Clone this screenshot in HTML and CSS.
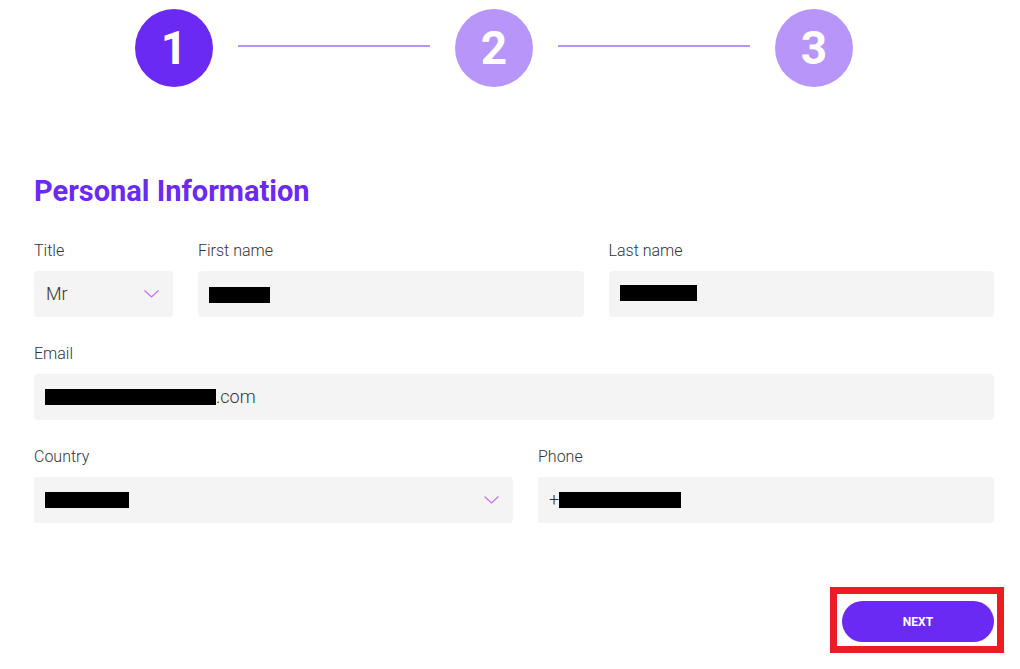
FILE: index.html
```html
<!doctype html>

<html>
  <head>
    <meta http-equiv="Content-Type" content="text/html; charset=utf-8">
    <title>Personal Information</title>
    <link rel="stylesheet" href="styles.css">
  </head>
  <body>

    <div class="page">
      <div class="steps">
        <span class="step active">1</span>
        <span class="step-line"></span>
        <span class="step">2</span>
        <span class="step-line"></span>
        <span class="step">3</span>
      </div>

      <h1>Personal Information</h1>

      <form class="form">
        <div class="row row-names">
          <div class="field">
            <label>Title</label>
            <div class="box select">
              <span class="value">Mr</span>
              <svg class="chevron" width="15" height="8" viewBox="0 0 15 8"><path d="M0.5 0.5 L7.5 7 L14.5 0.5" fill="none" stroke="#c76cf4" stroke-width="1.1"/></svg>
            </div>
          </div>
          <div class="field">
            <label>First name</label>
            <div class="box"><span class="redact redact-first"></span></div>
          </div>
          <div class="field">
            <label>Last name</label>
            <div class="box"><span class="redact redact-last"></span></div>
          </div>
        </div>

        <div class="row">
          <div class="field">
            <label>Email</label>
            <div class="box"><span class="redact redact-email"></span><span class="value">.com</span></div>
          </div>
        </div>

        <div class="row row-contact">
          <div class="field">
            <label>Country</label>
            <div class="box select">
              <span class="redact redact-country"></span>
              <svg class="chevron" width="15" height="8" viewBox="0 0 15 8"><path d="M0.5 0.5 L7.5 7 L14.5 0.5" fill="none" stroke="#c76cf4" stroke-width="1.1"/></svg>
            </div>
          </div>
          <div class="field">
            <label>Phone</label>
            <div class="box"><span class="value">+</span><span class="redact redact-phone"></span></div>
          </div>
        </div>

        <div class="actions">
          <div class="highlight">
            <button type="button" class="next">NEXT</button>
          </div>
        </div>
      </form>
    </div>

  </body>
</html>
```

FILE: styles.css
```css
body {
  background: #fff;
  color:      #333;
  font:       16px/20px Roboto, "Open Sans", Arial, sans-serif;
  margin:     0;
  padding:    0;
}

.page {
  padding: 9px 26px 0 34px;
}

.steps {
  align-items:  center;
  display:      flex;
  gap:          25px;
  padding-left: 101px;
}
.step {
  align-items:     center;
  background:      #b895f9;
  border-radius:   50%;
  color:           #fff;
  display:         flex;
  font-size:       46px;
  font-weight:     700;
  height:          78px;
  justify-content: center;
  width:           78px;
}
.step.active {
  background: #6a2af4;
}
.step-line {
  background:    #b895f9;
  height:        2px;
  margin-bottom: 4px;
  width:         192px;
}

h1 {
  color:       #6a2af4;
  font-size:   29px;
  font-weight: 700;
  line-height: 36px;
  margin:      86px 0 32px;
}

.row {
  display:       grid;
  gap:           25px;
  margin-bottom: 27px;
}
.row-names {
  grid-template-columns: 139px 1fr 1fr;
}
.row-contact {
  grid-template-columns: 479px 1fr;
  margin-bottom: 0;
}

label {
  display:       block;
  font-weight:   300;
  margin-bottom: 10px;
}

.box {
  align-items:   center;
  background:    #f4f4f4;
  border-radius: 4px;
  display:       flex;
  height:        46px;
  padding:       0 11px;
}
.select {
  justify-content: space-between;
  padding-right:   14px;
}
.value {
  font-size:   18px;
  font-weight: 300;
}
.select .value {
  padding-left: 1px;
}

.redact {
  background: #000;
  display:    inline-block;
  height:     16px;
}
.redact-first   { width: 61px; margin-top: 2px; }
.redact-last    { width: 77px; margin-top: -3px; }
.redact-email   { width: 171px; }
.redact-country { width: 84px; }
.redact-phone   { width: 122px; }

.chevron {
  display: block;
}

.actions {
  display:         flex;
  justify-content: flex-end;
  margin-top:      64px;
  margin-right:    -10px;
}
.highlight {
  border:  7px solid #ed1c24;
  padding: 7px 3px 4px 5px;
}
.next {
  background:    #6a2af4;
  border:        none;
  border-radius: 21px;
  color:         #fff;
  display:       block;
  font:          700 12px Roboto, Arial, sans-serif;
  height:        41px;
  width:         152px;
}
```
